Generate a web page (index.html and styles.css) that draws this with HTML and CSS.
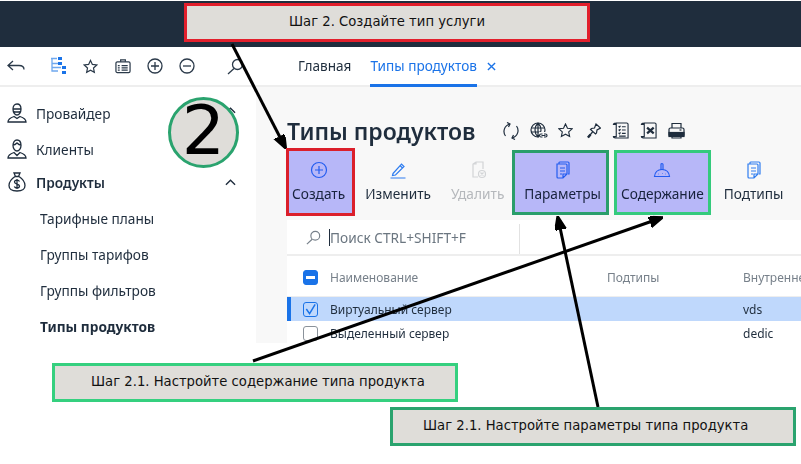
FILE: index.html
```html
<!DOCTYPE html>
<html lang="ru">
<head>
<meta charset="utf-8">
<title>Типы продуктов</title>
<link rel="stylesheet" href="styles.css">
</head>
<body>
<div class="page">
  <header class="topbar"></header>
  <div class="app">
    <aside class="sidebar">
      <div class="side-tools">
        <svg class="ti back" viewBox="0 0 18 12"><path d="M6 1 1 5.500 6 10M1 5.500h11c3 0 5 1 5 4"/></svg>
        <svg class="ti tree" viewBox="0 0 16 18"><path d="M1 1.500h6M2 1.500V14h6M2 6.500h6M2 10.500h9"/><rect class="fill" x="8" y="0" width="4" height="3"/><rect class="fill" x="8" y="5" width="4" height="3"/><rect class="fill" x="12" y="9" width="4" height="3"/><rect class="fill" x="12" y="14" width="4" height="3"/></svg>
        <svg class="ti star" viewBox="0 0 16 16"><path d="m8 1.500 2 4.300 4.700.6-3.500 3.200.9 4.700L8 12l-4.100 2.300.9-4.700L1.300 6.400 6 5.800z"/></svg>
        <svg class="ti case" viewBox="0 0 17 16"><rect x="1" y="3.500" width="15" height="11.500" rx="1.500"/><path d="M6 3.500V1.500h5v2M7 7.500h6.500M7 10h6.500M7 12.500h6.500M3 7.500h2M3 10h2M3 12.500h2"/></svg>
        <svg class="ti round" viewBox="0 0 16 16"><circle cx="8" cy="8" r="7"/><path d="M4 8h8M8 4v8"/></svg>
        <svg class="ti round" viewBox="0 0 16 16"><circle cx="8" cy="8" r="7"/><path d="M4 8h8"/></svg>
        <svg class="ti find" viewBox="0 0 17 17"><circle cx="10.500" cy="6.500" r="5"/><path d="M7 10.500 1 16"/></svg>
      </div>
      <nav class="nav">
        <a class="nav-item">
          <svg class="ni" viewBox="0 0 20 20"><path d="M6 6c0-3 1.500-5 4-5s4 2 4 5c0 3.500-2 6-4 6s-4-2.500-4-6zM5.500 6h9M6 8l2 1h4l2-1M1 19c0-3 3-4.500 6-5.500l3 2 3-2c3 1 6 2.500 6 5.500z"/></svg>
          <span>Провайдер</span>
          <svg class="chev" viewBox="0 0 12 7"><path d="m1 6 5-5 5 5"/></svg>
        </a>
        <a class="nav-item">
          <svg class="ni" viewBox="0 0 20 20"><path d="M6 6.500C6 3.500 7.500 1 10 1s4 2.500 4 5.500-2 5.500-4 5.500-4-2.500-4-5.500zM6 6c2 0 3-1 4-2 1 1 2 2 4 2M1 19c0-3 3-4.500 6-5.500l3 3 3-3c3 1 6 2.500 6 5.500z"/></svg>
          <span>Клиенты</span>
        </a>
        <a class="nav-item nav-open">
          <svg class="ni" viewBox="0 0 20 20"><path d="M7 1h6l-1.500 3.500h-3zM8 4.500c-3 2-6 5-6 9 0 3.500 3 5.500 8 5.500s8-2 8-5.500c0-4-3-7-6-9zM12.500 9.500c-.5-1-1.500-1.300-2.500-1.300-1.500 0-2.500.8-2.500 1.900 0 2.600 5 1.400 5 4 0 1.100-1 1.900-2.500 1.900-1.200 0-2.200-.5-2.700-1.500M10 7v10"/></svg>
          <span>Продукты</span>
          <svg class="chev" viewBox="0 0 12 7"><path d="m1 6 5-5 5 5"/></svg>
        </a>
        <a class="sub">Тарифные планы</a>
        <a class="sub">Группы тарифов</a>
        <a class="sub">Группы фильтров</a>
        <a class="sub sub-on">Типы продуктов</a>
      </nav>
    </aside>
    <main class="content">
      <div class="tabs">
        <a class="tab">Главная</a>
        <a class="tab tab-on">Типы продуктов</a>
        <svg class="tab-x" viewBox="0 0 10 10"><path d="m1 1 8 8M9 1 1 9"/></svg>
      </div>
      <div class="body">
        <div class="title-row">
          <h1>Типы продуктов</h1>
          <div class="title-icons">
            <svg class="i-sync" viewBox="0 0 18 18"><path d="M3.500 14C.5 10 2 3.500 8 2M5 .5 8 2 6.500 5M14.500 4c3 4 1.500 10.500-4.500 12M13 17.500 10 16l1.500-3"/></svg>
            <svg class="i-globe" viewBox="0 0 18 18"><circle cx="8" cy="8" r="7"/><path d="M1 6h14M1 10h9M8 1v14M8 1C4 5 4 11 8 15M8 1c4 4 4 10 0 14"/><rect class="paper" x="9" y="10" width="9" height="7"/><path d="M12.500 12H11a1.500 1.500 0 0 0 0 3h1.500M14 12h1.500a1.500 1.500 0 0 1 0 3H14M11.500 13.500h4"/></svg>
            <svg class="i-star" viewBox="0 0 16 16"><path d="m8 1 2.100 4.600 4.900.6-3.600 3.300 1 4.900L8 12l-4.400 2.400 1-4.900L1 6.200l4.900-.6z"/></svg>
            <svg class="i-pin" viewBox="0 0 14 16"><path d="M9 1 13.500 5 10 7l-.5 3-1 1L3.500 6.500l1-1L7.500 5zM5.500 9 1 14.500"/><path class="thick" d="M3.500 11.500 1 14.500"/></svg>
            <svg class="i-doc" viewBox="0 0 17 18"><path d="M4 1h11c1 0 1.500.5 1.500 1.500V17H4c-1 0-3-.2-3-1.500h3zM4 1C3 1 1 1.200 1 2.500h3M4 2.500v13M6.500 4.500l1 1 1-1.500M10 5h4M6.500 8l1 1 1-1.500M10 8.500h4M6.500 11.500l1 1 1-1.500M10 12h4M7 15h7"/></svg>
            <svg class="i-doc" viewBox="0 0 17 18"><path d="M4 1h11c1 0 1.500.5 1.500 1.500V17H4c-1 0-3-.2-3-1.500h3zM4 1C3 1 1 1.200 1 2.500h3M4 2.500v13"/><path class="thick" d="m7 6 7 6M14 6l-7 6"/></svg>
            <svg class="i-doc" viewBox="0 0 17 17"><path d="M4 6V1.500h9V6M2.500 6h12A1.500 1.500 0 0 1 16 7.500V13a1.500 1.500 0 0 1-1.500 1.500h-12A1.500 1.500 0 0 1 1 13V7.500A1.500 1.500 0 0 1 2.500 6zM4 14.500v1.500h9v-1.500"/><rect class="dark" x="1" y="10.500" width="15" height="4"/><path d="M11.500 8h2"/></svg>
          </div>
        </div>
        <div class="actions">
          <button class="act">
            <svg class="ai" viewBox="0 0 18 18"><circle cx="9" cy="9" r="7.500"/><path d="M5 9h8M9 5v8"/></svg>
            Создать
          </button>
          <button class="act">
            <svg class="ai" viewBox="0 0 18 18"><path d="M4 12.500 12.500 3l2.500 2.500L6.500 14 3.500 14.500zM11 4.500l2.500 2.500M1.500 17h15"/></svg>
            Изменить
          </button>
          <button class="act act-off">
            <svg class="ai" viewBox="0 0 18 18"><path d="M9 16H4V3l3-2h7v7M4 3h3V1"/><circle cx="13" cy="13" r="3.500"/><path d="m11.500 11.500 3 3M14.500 11.500l-3 3"/></svg>
            Удалить
          </button>
          <button class="act">
            <svg class="ai" viewBox="0 0 18 18"><path d="M5 3V1.500A1 1 0 0 1 6 1h8a1 1 0 0 1 1 1v11h-1M3 3h9a1 1 0 0 1 1 1v9l-4 4H4a1 1 0 0 1-1-1zM6 7h5M6 10h5M6 13h2M13 13H9v4"/></svg>
            Параметры
          </button>
          <button class="act">
            <svg class="ai" viewBox="0 0 18 18"><path d="M1.500 15.500C2 11 5 8.500 9 8.500s7 2.500 7.500 7zM1 15.500h16M8 8.500V3.500a1 1 0 0 1 2 0v5M5 13h.5M9 12.500h.5M12.500 13h.5"/></svg>
            Содержание
          </button>
          <button class="act">
            <svg class="ai" viewBox="0 0 18 18"><path d="M5 3V1.500A1 1 0 0 1 6 1h8a1 1 0 0 1 1 1v11h-1M3 3h9a1 1 0 0 1 1 1v9l-4 4H4a1 1 0 0 1-1-1zM6 7h5M6 10h5M6 13h2M13 13H9v4"/></svg>
            Подтипы
          </button>
        </div>
        <section class="panel">
          <div class="search">
            <svg class="si" viewBox="0 0 17 17"><circle cx="10.500" cy="6.500" r="5"/><path d="M7 10.500 1 16"/></svg>
            <span class="caret"></span>
            <span class="ph">Поиск CTRL+SHIFT+F</span>
            <span class="sdiv"></span>
          </div>
          <div class="row head">
            <span class="cb cb-minus"></span>
            <span class="c1">Наименование</span>
            <span class="c2">Подтипы</span>
            <span class="c3">Внутренне</span>
          </div>
          <div class="row rsel">
            <span class="cb cb-check"><svg viewBox="0 0 14 14"><path d="m2.500 6.500 3.500 5 6-10"/></svg></span>
            <span class="c1">Виртуальный сервер</span>
            <span class="c2"></span>
            <span class="c3">vds</span>
          </div>
          <div class="row rlast">
            <span class="cb"></span>
            <span class="c1">Выделенный сервер</span>
            <span class="c2"></span>
            <span class="c3">dedic</span>
          </div>
        </section>
      </div>
    </main>
  </div>

  <div class="mark mark-create"></div>
  <div class="mark mark-params"></div>
  <div class="mark mark-cont"></div>

  <svg class="arrows" viewBox="0 0 801 464">
    <defs>
      <marker id="ah" markerWidth="14" markerHeight="12" refX="12" refY="5" orient="auto" markerUnits="userSpaceOnUse"><path d="M0 0 13 5 0 10 3 5z" fill="#000"/></marker>
    </defs>
    <path d="M232 44 285 147" marker-end="url(#ah)"/>
    <path d="M253 361 661 218" marker-end="url(#ah)"/>
    <path d="M598 407 558 218" marker-end="url(#ah)"/>
  </svg>

  <div class="step-num">2</div>
  <div class="note note-top">Шаг 2. Создайте тип услуги</div>
  <div class="note note-cont">Шаг 2.1. Настройте содержание типа продукта</div>
  <div class="note note-params">Шаг 2.1. Настройте параметры типа продукта</div>
</div>
</body>
</html>
```
FILE: styles.css
```css
* { box-sizing: border-box; }
html, body { margin: 0; padding: 0; height: 100%; background: #fff; overflow: hidden; }
.page { position: relative; width: 801px; height: 464px; overflow: hidden; font-family: "Noto Sans", sans-serif; color: #1f2d3d; }
svg { fill: none; stroke: currentColor; stroke-width: 1.300; display: block; }

.topbar { height: 46px; margin-top: 1px; background: #1f2d3d; }
.app { display: flex; height: 296px; }

.sidebar { width: 256px; flex: none; background: #fff; }
.side-tools { height: 40px; padding-left: 7px; display: flex; align-items: center; border-bottom: 2px solid #eee; color: #2b3a4a; }
.ti { width: 16px; height: 16px; flex: none; }
.back { width: 18px; height: 12px; margin-right: 25px; }
.tree { height: 18px; margin-right: 17px; color: #6fa8ee; }
.tree .fill { fill: #1a73e8; stroke: none; }
.star { width: 15px; height: 15px; margin-right: 17px; }
.case { width: 16px; margin-right: 16px; }
.round { margin-right: 16px; }
.find { width: 17px; height: 17px; margin-left: 16px; }

.nav { padding-top: 8px; }
.nav-item { height: 36px; display: flex; align-items: center; padding-left: 7px; font-size: 13.700px; position: relative; }
.nav-item span { margin-left: 9px; }
.ni { width: 20px; height: 20px; flex: none; }
.chev { width: 11px; height: 7px; position: absolute; left: 225px; top: 12px; stroke-width: 1.500; }
.nav-open { height: 30px; font-weight: 600; }
.sub { display: block; height: 36px; line-height: 36px; padding-left: 40px; font-size: 13.700px; }
.nav-open + .sub { margin-top: 4px; }
.sub-on { font-weight: 700; }

.content { flex: 1; min-width: 0; display: flex; flex-direction: column; background: #f8f8f8; }
.tabs { height: 40px; flex: none; background: #fff; border-bottom: 2px solid #eee; display: flex; align-items: flex-start; padding-left: 42px; font-size: 13.600px; }
.tab { height: 40px; line-height: 38px; margin-right: 20px; }
.tab:first-child { margin-right: 19px; }
.tab-on { color: #1a73e8; border-bottom: 3px solid #1a73e8; margin-right: 10px; }
.tab-x { width: 9px; height: 9px; margin-top: 15px; color: #1a73e8; stroke-width: 1.500; }

.body { flex: 1; padding-left: 31px; min-height: 0; }
.title-row { display: flex; align-items: center; height: 60px; padding-top: 27px; }
h1 { margin: 0; font-size: 23px; font-weight: 600; line-height: 32px; white-space: nowrap; }
.title-icons { display: flex; align-items: center; gap: 10px; margin-left: 26px; }
.title-icons svg { width: 18px; height: 18px; stroke-width: 1.200; }
.title-icons .i-star { width: 15px; height: 15px; }
.title-icons .i-pin { width: 14px; height: 16px; margin-left: 4px; }
.title-icons .i-doc { width: 17px; height: 17px; margin-left: 1px; }
.title-icons .paper { fill: #f8f8f8; stroke: none; }
.title-icons .thick { stroke-width: 2.400; }
.title-icons .dark { fill: #1f2d3d; }

.actions { display: flex; gap: 20px; height: 73px; padding: 1px 0 0 5px; }
.act { flex: none; padding: 13px 0 0; border: 0; background: none; font: 13.700px "Noto Sans", sans-serif; color: #1f2d3d; display: flex; flex-direction: column; align-items: center; gap: 5px; height: 68px; }
.ai { width: 18px; height: 18px; color: #2f7df0; stroke-width: 1.200; }
.act-off { color: #b5b8bc; }
.act-off .ai { color: #d2d4d6; }

.panel { background: #fff; width: 514px; font-size: 12px; height: 123px; }
.search { height: 36px; display: flex; align-items: center; padding-left: 19px; border-bottom: 2px solid #eee; position: relative; }
.si { width: 15px; height: 15px; color: #77808a; }
.caret { width: 1px; height: 17px; margin-left: 8px; background: #1f2d3d; }
.ph { font-size: 13.700px; color: #6b7680; }
.sdiv { position: absolute; left: 232px; top: 4px; width: 1px; height: 30px; background: #e2e2e2; }
.row { display: flex; align-items: center; height: 22px; position: relative; padding-left: 16px; }
.head { height: 41px; padding-top: 2px; color: #77808a; border-bottom: 1px solid #eee; }
.rsel { height: 24px; background: #bfd8fc; border-left: 4px solid #1a73e8; padding-left: 12px; }
.rlast { padding-top: 2px; }
.cb { width: 15px; height: 15px; flex: none; border: 1px solid #8a929a; border-radius: 3px; background: #fff; }
.cb-minus { background: #1a73e8; border-color: #1a73e8; position: relative; }
.cb-minus::after { content: ""; position: absolute; left: 2px; right: 2px; top: 5px; height: 3px; background: #fff; }
.cb-check { border-color: #1a73e8; background: none; }
.cb-check svg { width: 13px; height: 13px; color: #1a73e8; stroke-width: 1.600; }
.c1 { width: 277px; margin-left: 12px; flex: none; }
.c2 { width: 136px; flex: none; }
.c3 { white-space: nowrap; }

.mark { position: absolute; background: #bcbcff; mix-blend-mode: multiply; border: 3px solid; }
.mark-create { left: 286px; top: 148px; width: 69px; height: 68px; border-color: #e21f2c; }
.mark-params { left: 512px; top: 150px; width: 97px; height: 65px; border-color: #2aa36e; }
.mark-cont { left: 614px; top: 150px; width: 97px; height: 65px; border-color: #35d07f; }

.arrows { position: absolute; left: 0; top: 0; width: 801px; height: 464px; stroke: #000; stroke-width: 3; }

.step-num { position: absolute; left: 168px; top: 97px; width: 71px; height: 71px; border: 3px solid #2aa36e; border-radius: 50%; background: #dfddd9; color: #000; font: 68px/62px "DejaVu Sans", sans-serif; text-align: center; }

.note { position: absolute; background: #dfddd9; color: #111; font: 13.200px "DejaVu Sans", sans-serif; display: flex; align-items: center; border: 3px solid; padding-bottom: 2px; }
.note-top { left: 184px; top: 3px; width: 406px; height: 39px; border-color: #e21f2c; justify-content: center; }
.note-cont { left: 52px; top: 363px; width: 406px; height: 39px; border-color: #35d07f; padding-left: 36px; }
.note-params { left: 390px; top: 407px; width: 406px; height: 39px; border-color: #2aa36e; padding-left: 30px; }
```
